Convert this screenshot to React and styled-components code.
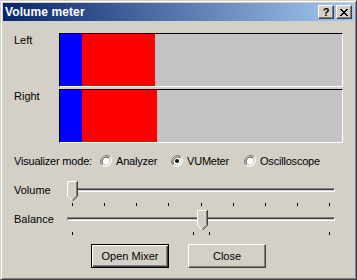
import React from 'react';
import styled, { createGlobalStyle } from 'styled-components';

const Global = createGlobalStyle`
  html, body {
    margin: 0;
    padding: 0;
    background: #d4d0c8;
  }
  body {
    font-family: "Liberation Sans", Arial, sans-serif;
    font-size: 11px;
    color: #000;
  }
`;

const Window = styled.div`
  box-sizing: border-box;
  width: 357px;
  height: 280px;
  display: flex;
  flex-direction: column;
  background: #d4d0c8;
  border: 1px solid;
  border-color: #d4d0c8 #404040 #404040 #d4d0c8;
  box-shadow: inset 1px 1px #fff, inset -1px -1px #808080;
  padding: 2px;
`;

const TitleBar = styled.div`
  height: 18px;
  flex: none;
  display: flex;
  align-items: center;
  justify-content: space-between;
  padding: 0 2px 0 2px;
  background: linear-gradient(to right, #0a246a, #a6caf0);
`;

const Title = styled.span`
  color: #fff;
  font-weight: bold;
  font-size: 12px;
  letter-spacing: 0.1px;
`;

const CaptionButtons = styled.div`
  display: flex;
  gap: 2px;
`;

const CaptionButton = styled.div`
  box-sizing: border-box;
  width: 16px;
  height: 14px;
  display: flex;
  align-items: center;
  justify-content: center;
  background: #d4d0c8;
  border-top: 1px solid #fff;
  border-left: 1px solid #fff;
  border-right: 1px solid #404040;
  border-bottom: 1px solid #404040;
  box-shadow: inset -1px -1px #808080;
  font-weight: bold;
  font-size: 11px;
  line-height: 1;
`;

const Body = styled.div`
  flex: 1;
  display: flex;
  flex-direction: column;
  padding: 12px 11px 0 11px;
`;

const MeterGrid = styled.div`
  display: grid;
  grid-template-columns: 45px 284px;
  row-gap: 2px;
`;

const Label = styled.span`
  line-height: 12px;
  padding-top: 1px;
`;

const Meter = styled.div`
  box-sizing: border-box;
  width: 284px;
  height: 54px;
  display: flex;
  border-top: 1px solid #000;
  border-left: 1px solid #000;
  border-right: 1px solid #fff;
  border-bottom: 1px solid #fff;
  background: #c6c3c6;
`;

const Segment = styled.div`
  height: 100%;
  background: ${(p) => p.$color};
`;

const ModeRow = styled.div`
  display: flex;
  align-items: center;
  height: 13px;
  margin-top: 11px;
  white-space: nowrap;
  letter-spacing: -0.2px;
`;

const ModeLabel = styled.span`
  flex: none;
  width: 86px;
`;

const RadioOption = styled.label`
  flex: none;
  display: flex;
  align-items: center;
  gap: 4px;
  width: ${(p) => p.$width}px;
`;

const SliderRow = styled.div`
  display: grid;
  grid-template-columns: 53px 268px;
  height: 26px;
  margin-top: ${(p) => p.$top}px;
`;

const SliderLabel = styled.span`
  line-height: 12px;
  padding-top: 3px;
`;

const Slider = styled.div`
  position: relative;
  height: 26px;
`;

const Track = styled.div`
  box-sizing: border-box;
  position: absolute;
  left: 0;
  right: 0;
  top: 7px;
  height: 4px;
  border-top: 1px solid #808080;
  border-bottom: 1px solid #fff;
  border-left: 1px solid #808080;
  border-right: 1px solid #fff;
  background: #404040;
  box-shadow: inset 0 -1px #d4d0c8;
`;

const Thumb = styled.svg`
  position: absolute;
  top: 0;
`;

const Tick = styled.div`
  position: absolute;
  top: 22px;
  width: 1px;
  height: 3px;
  background: #000;
`;

const ButtonRow = styled.div`
  display: flex;
  justify-content: center;
  gap: 19px;
  margin-top: 8px;
  margin-left: -11px;
  margin-right: -11px;
`;

const Button = styled.button`
  box-sizing: border-box;
  width: 78px;
  height: 24px;
  padding: 0;
  font-family: "Liberation Sans", Arial, sans-serif;
  font-size: 11px;
  color: #000;
  background: #d4d0c8;
  border: 1px solid;
  border-color: ${(p) => (p.$default ? '#000' : '#fff #404040 #404040 #fff')};
  box-shadow: ${(p) =>
    p.$default
      ? 'inset 1px 1px #fff, inset -1px -1px #404040, inset -2px -2px #808080'
      : 'inset -1px -1px #808080'};
`;

const RadioIcon = ({ checked }) => (
  <svg width="12" height="12" viewBox="0 0 12 12">
    <path d="M10.2 1.8 A6 6 0 0 0 1.8 10.2" stroke="#808080" strokeWidth="1" fill="none" />
    <path d="M1.8 10.2 A6 6 0 0 0 10.2 1.8" stroke="#fff" strokeWidth="1" fill="none" />
    <circle cx="6" cy="6" r="4.5" fill="#fff" />
    <path d="M9.2 2.8 A4.6 4.6 0 0 0 2.8 9.2" stroke="#404040" strokeWidth="1" fill="none" />
    <path d="M2.8 9.2 A4.6 4.6 0 0 0 9.2 2.8" stroke="#d4d0c8" strokeWidth="1" fill="none" />
    {checked && <circle cx="6" cy="6" r="2" fill="#000" />}
  </svg>
);

const ThumbIcon = ({ left }) => (
  <Thumb width="11" height="21" viewBox="0 0 11 21" style={{ left }}>
    <path d="M0 0 H11 V15 L5.5 20.5 L0 15 Z" fill="#d4d0c8" />
    <path d="M0.5 15 V0.5 H10" stroke="#fff" fill="none" />
    <path d="M0.5 15 L5 19.5" stroke="#fff" fill="none" />
    <path d="M10.5 0 V15.2 L5.5 20.2" stroke="#404040" fill="none" />
    <path d="M9.5 1 V14.8 L5.5 18.8" stroke="#808080" fill="none" />
  </Thumb>
);

const volumeTicks = Array.from({ length: 9 }, (_, i) => Math.round(5 + (i * 257) / 8));
const balanceTicks = [5, 126, 142, 262];

const meters = [
  { label: 'Left', red: 73 },
  { label: 'Right', red: 75 },
];

const modes = [
  { label: 'Analyzer', checked: false, width: 71 },
  { label: 'VUMeter', checked: true, width: 73 },
  { label: 'Oscilloscope', checked: false, width: 80 },
];

export default function App() {
  return (
    <>
      <Global />
      <Window>
        <TitleBar>
          <Title>Volume meter</Title>
          <CaptionButtons>
            <CaptionButton>?</CaptionButton>
            <CaptionButton>
              <svg width="8" height="7" viewBox="0 0 8 7">
                <path d="M0 0 L7 7 M1 0 L8 7 M7 0 L0 7 M8 0 L1 7" stroke="#000" strokeWidth="1" />
              </svg>
            </CaptionButton>
          </CaptionButtons>
        </TitleBar>
        <Body>
          <MeterGrid>
            {meters.map((m) => (
              <React.Fragment key={m.label}>
                <Label>{m.label}</Label>
                <Meter>
                  <Segment $color="#0000ff" style={{ width: 22 }} />
                  <Segment $color="#ff0000" style={{ width: m.red }} />
                </Meter>
              </React.Fragment>
            ))}
          </MeterGrid>

          <ModeRow>
            <ModeLabel>Visualizer mode:</ModeLabel>
            {modes.map((m) => (
              <RadioOption key={m.label} $width={m.width}>
                <RadioIcon checked={m.checked} />
                {m.label}
              </RadioOption>
            ))}
          </ModeRow>

          <SliderRow $top={14}>
            <SliderLabel>Volume</SliderLabel>
            <Slider>
              <Track />
              <ThumbIcon left={0} />
              {volumeTicks.map((x) => (
                <Tick key={x} style={{ left: x }} />
              ))}
            </Slider>
          </SliderRow>

          <SliderRow $top={3}>
            <SliderLabel>Balance</SliderLabel>
            <Slider>
              <Track />
              <ThumbIcon left={130} />
              {balanceTicks.map((x) => (
                <Tick key={x} style={{ left: x }} />
              ))}
            </Slider>
          </SliderRow>

          <ButtonRow>
            <Button $default>Open Mixer</Button>
            <Button>Close</Button>
          </ButtonRow>
        </Body>
      </Window>
    </>
  );
}
